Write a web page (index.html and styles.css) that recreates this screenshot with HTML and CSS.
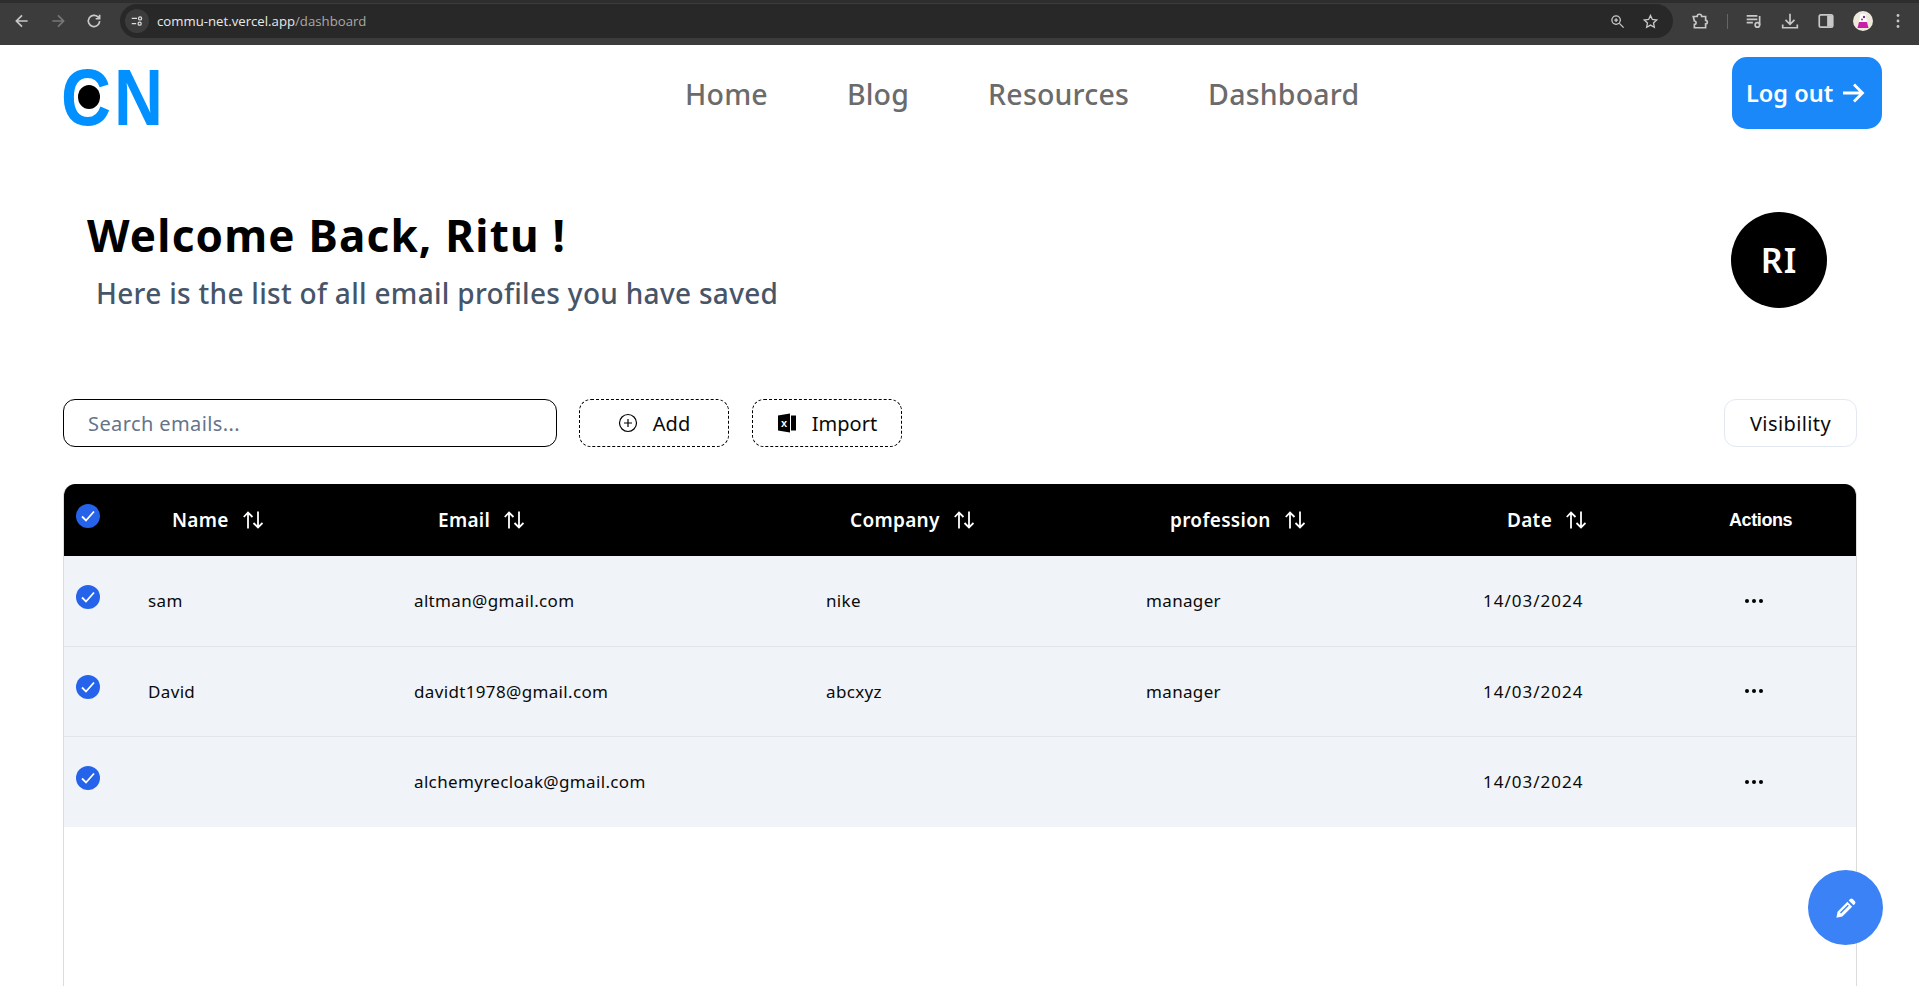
FILE: index.html
```html
<!DOCTYPE html>
<html lang="en">
<head>
  <meta charset="UTF-8" />
  <meta name="viewport" content="width=device-width, initial-scale=1.0"/>
  <title>Dashboard</title>
  <link rel="stylesheet" href="styles.css">
</head>
<body>

<div class="browser-bar">
  <svg class="bar-icon" viewBox="0 0 16 16"><path d="M13 8H3.500M8 3 3 8l5 5"/></svg>
  <svg class="bar-icon bar-icon-dim" viewBox="0 0 16 16"><path d="M3 8h9.500M8 3l5 5-5 5"/></svg>
  <svg class="bar-icon" viewBox="0 0 16 16"><path d="M13 8a5 5 0 1 1-1.500-3.600L13 6M13 2.500V6H9.500"/></svg>
  <div class="address">
    <span class="site-info">
      <svg viewBox="0 0 16 16"><path d="M2 5h6M2 11h5"/><circle cx="11.500" cy="5" r="1.800"/><circle cx="11" cy="11" r="1.800"/></svg>
    </span>
    <span class="url">commu-net.vercel.app<span class="url-path">/dashboard</span></span>
    <svg class="address-icon" viewBox="0 0 16 16"><circle cx="6.500" cy="6.500" r="4.500"/><path d="m10 10 4.500 4.500M4.500 6.500h4M6.500 4.500v4"/></svg>
    <svg class="address-icon" viewBox="0 0 16 16"><path d="m8 1.500 2 4.300 4.600.6-3.400 3.100.9 4.600L8 11.800l-4.100 2.300.9-4.600L1.400 6.400 6 5.800z"/></svg>
  </div>
  <div class="bar-right">
    <svg class="bar-icon" viewBox="0 0 16 16"><path d="M2 4h3.500a2 2 0 0 1 4 0H13v3.500a1.500 1.500 0 0 1 0 3V14H3v-3a1.500 1.500 0 0 0 0-3z"/></svg>
    <span class="bar-sep"></span>
    <svg class="bar-icon" viewBox="0 0 16 16"><path d="M1.500 3.500H11M1.500 6.500H11M1.500 9.500H7M13 3.500v8"/><circle cx="11" cy="11.500" r="2"/></svg>
    <svg class="bar-icon" viewBox="0 0 16 16"><path d="M8 1.500v9M4 7l4 4 4-4M1.500 11v3h13v-3"/></svg>
    <svg class="bar-icon" viewBox="0 0 16 16"><rect x="2" y="2.500" width="12" height="11" rx="1.500"/><rect class="bar-fill" x="9" y="3" width="4.500" height="10"/></svg>
    <svg class="profile" viewBox="0 0 20 20"><circle cx="10" cy="10" r="10" fill="#efe9dc"/><path d="M7.500 3h5l2.500 14H5z" fill="#fff"/><path d="M6 11h8l1.500 6h-11z" fill="#c81fa8"/><circle cx="11" cy="6" r="1.200" fill="#7a2a8c"/><circle cx="9" cy="8.500" r=".9" fill="#7a2a8c"/></svg>
    <svg class="bar-dots" viewBox="0 0 4 16"><circle cx="2" cy="2.500" r="1.400"/><circle cx="2" cy="8" r="1.400"/><circle cx="2" cy="13.500" r="1.400"/></svg>
  </div>
</div>

<nav class="nav">
  <svg class="logo" viewBox="-6 -20 124 96">
    <text class="logo-letter" x="-3" y="57" textLength="50" lengthAdjust="spacingAndGlyphs">C</text>
    <text class="logo-letter" x="50" y="57" textLength="49" lengthAdjust="spacingAndGlyphs">N</text>
    <ellipse cx="25" cy="29" rx="11" ry="12" fill="#000"/>
  </svg>
  <div class="nav-links">
    <a href="#">Home</a>
    <a href="#">Blog</a>
    <a href="#">Resources</a>
    <a href="#">Dashboard</a>
  </div>
  <button class="logout">Log out
    <svg viewBox="0 0 24 24"><path d="M2 12h19M13 3.500l8.500 8.500-8.500 8.500"/></svg>
  </button>
</nav>

<main class="content">
  <section class="hero">
    <div>
      <h1>Welcome Back, Ritu !</h1>
      <p>Here is the list of all email profiles you have saved</p>
    </div>
    <div class="avatar">RI</div>
  </section>

  <section class="toolbar">
    <input class="search" type="text" placeholder="Search emails...">
    <button class="dashed-btn">
      <svg viewBox="0 0 20 20"><circle cx="10" cy="10" r="8.500"/><path d="M10 6v8M6 10h8"/></svg>
      Add
    </button>
    <button class="dashed-btn">
      <svg class="excel" viewBox="0 0 20 20"><path d="M1 2.500 13 .5v19L1 17.500z"/><rect x="14" y="2.500" width="5" height="15"/><text x="4" y="13.500" class="excel-x">x</text></svg>
      Import
    </button>
    <button class="visibility">Visibility</button>
  </section>

  <div class="table-wrap">
    <table class="emails">
      <colgroup>
        <col class="col-check"><col class="col-name"><col class="col-email"><col class="col-company"><col class="col-profession"><col class="col-date"><col class="col-actions">
      </colgroup>
      <thead>
        <tr>
          <th class="check-cell"><svg class="check" viewBox="0 0 24 24"><circle cx="12" cy="12" r="12"/><path d="m6 12.500 4 4 8-9"/></svg></th>
          <th><span class="sort">Name <svg viewBox="0 0 20 18"><path d="M5 17.500V1.500M.8 6 5 1.500 9.500 6M15 .5v16M10.500 12l4.500 4.500 4.500-4.500"/></svg></span></th>
          <th><span class="sort">Email <svg viewBox="0 0 20 18"><path d="M5 17.500V1.500M.8 6 5 1.500 9.500 6M15 .5v16M10.500 12l4.500 4.500 4.500-4.500"/></svg></span></th>
          <th><span class="sort">Company <svg viewBox="0 0 20 18"><path d="M5 17.500V1.500M.8 6 5 1.500 9.500 6M15 .5v16M10.500 12l4.500 4.500 4.500-4.500"/></svg></span></th>
          <th><span class="sort">profession <svg viewBox="0 0 20 18"><path d="M5 17.500V1.500M.8 6 5 1.500 9.500 6M15 .5v16M10.500 12l4.500 4.500 4.500-4.500"/></svg></span></th>
          <th class="date-head"><span class="sort">Date <svg viewBox="0 0 20 18"><path d="M5 17.500V1.500M.8 6 5 1.500 9.500 6M15 .5v16M10.500 12l4.500 4.500 4.500-4.500"/></svg></span></th>
          <th class="actions-head">Actions</th>
        </tr>
      </thead>
      <tbody>
        <tr>
          <td class="check-cell"><svg class="check" viewBox="0 0 24 24"><circle cx="12" cy="12" r="12"/><path d="m6 12.500 4 4 8-9"/></svg></td>
          <td>sam</td>
          <td>altman@gmail.com</td>
          <td>nike</td>
          <td>manager</td>
          <td class="date">14/03/2024</td>
          <td><svg class="dots" viewBox="0 0 20 4"><circle cx="3" cy="2" r="2"/><circle cx="10" cy="2" r="2"/><circle cx="17" cy="2" r="2"/></svg></td>
        </tr>
        <tr>
          <td class="check-cell"><svg class="check" viewBox="0 0 24 24"><circle cx="12" cy="12" r="12"/><path d="m6 12.500 4 4 8-9"/></svg></td>
          <td>David</td>
          <td>davidt1978@gmail.com</td>
          <td>abcxyz</td>
          <td>manager</td>
          <td class="date">14/03/2024</td>
          <td><svg class="dots" viewBox="0 0 20 4"><circle cx="3" cy="2" r="2"/><circle cx="10" cy="2" r="2"/><circle cx="17" cy="2" r="2"/></svg></td>
        </tr>
        <tr>
          <td class="check-cell"><svg class="check" viewBox="0 0 24 24"><circle cx="12" cy="12" r="12"/><path d="m6 12.500 4 4 8-9"/></svg></td>
          <td></td>
          <td>alchemyrecloak@gmail.com</td>
          <td></td>
          <td></td>
          <td class="date">14/03/2024</td>
          <td><svg class="dots" viewBox="0 0 20 4"><circle cx="3" cy="2" r="2"/><circle cx="10" cy="2" r="2"/><circle cx="17" cy="2" r="2"/></svg></td>
        </tr>
      </tbody>
    </table>
  </div>
</main>

<button class="fab">
  <svg viewBox="0 0 24 24"><path d="M16.500 2.300a2 2 0 0 1 2.800 0l2.400 2.400a2 2 0 0 1 0 2.800l-1.500 1.500-5.200-5.200zM13.500 5.300l5.200 5.200L8 21.200 1.500 22.500 2.800 16z"/><path class="fab-cut" d="m6 17.500 8.500-8.500"/></svg>
</button>

</body>
</html>
```

FILE: styles.css
```css
* { box-sizing: border-box; }
html, body { height: 100%; }
body { margin: 0; overflow: hidden; background: #fff; color: #0a0a0a; font-family: "Noto Sans", sans-serif; }
button { font-family: inherit; cursor: pointer; }

/* browser chrome */
.browser-bar {
  height: 45px;
  display: flex;
  align-items: center;
  padding: 0 0 6px 13px;
  background: #3c3c3c;
  border-top: 3px solid #2e2e2e;
}

.bar-icon {
  width: 18px;
  height: 18px;
  margin-right: 18px;
  fill: none;
  stroke: #c8c8c8;
  stroke-width: 1.500;
  flex: none;
}

.bar-icon-dim { stroke: #777; }
.bar-fill { fill: #c8c8c8; stroke: none; }

.address {
  display: flex;
  align-items: center;
  flex: none;
  width: 1553px;
  height: 34px;
  margin-left: -1px;
  padding: 0 15px 0 5px;
  background: #282828;
  border-radius: 17px;
}

.site-info {
  display: flex;
  align-items: center;
  justify-content: center;
  width: 24px;
  height: 24px;
  border-radius: 50%;
  background: #3c3c3c;
}

.site-info svg { width: 14px; height: 14px; fill: none; stroke: #ddd; stroke-width: 1.400; }

.url { margin-left: 8px; flex-grow: 1; font-family: "Open Sans", sans-serif; font-size: 13.200px; color: #e8e8e8; }
.url-path { color: #a9a9a9; }

.address-icon { width: 15px; height: 15px; margin-left: 18px; fill: none; stroke: #c8c8c8; stroke-width: 1.400; }

.bar-right { display: flex; align-items: center; margin-left: 18px; }
.bar-sep { width: 1px; height: 15px; margin-right: 17px; background: #666; }
.profile { width: 20px; height: 20px; margin-right: 23px; }
.bar-dots { width: 4px; height: 16px; fill: #c8c8c8; }

/* top nav */
.nav {
  display: flex;
  align-items: flex-start;
  height: 84px;
  padding: 12px 37px 0 58px;
}

.logo { width: 124px; height: 96px; margin-top: -9px; flex: none; }
.logo-letter { font-family: "Liberation Sans", sans-serif; font-weight: 700; font-size: 79px; fill: #0090ff; }

.nav-links { display: flex; gap: 79px; margin-left: 503px; margin-top: 19px; }
.nav-links a { font-size: 28.500px; font-weight: 500; line-height: 36px; letter-spacing: 0.200px; color: #6b6b6b; text-decoration: none; }

.logout {
  display: flex;
  align-items: center;
  gap: 8px;
  width: 150px;
  height: 72px;
  margin-left: auto;
  padding: 0 14px;
  border: none;
  border-radius: 15px;
  background: #1a88f8;
  color: #fff;
  font-size: 23.500px;
  font-weight: 600;
}

.logout svg { width: 24px; height: 24px; flex: none; fill: none; stroke: #fff; stroke-width: 2.800; }

/* page */
.content { padding: 0 62px 0 63px; }

.hero { display: flex; justify-content: space-between; align-items: flex-start; margin-top: 78px; padding: 0 30px 0 24px; }
.hero h1 { margin: 0; font-size: 44px; line-height: 56px; font-weight: 700; letter-spacing: 1.200px; color: #000; }
.hero p { margin: 12px 0 0 9px; font-size: 28px; line-height: 36px; font-weight: 500; letter-spacing: 0.300px; color: #475569; }

.avatar {
  display: flex;
  align-items: center;
  justify-content: center;
  width: 96px;
  height: 96px;
  margin-top: 5px;
  border-radius: 50%;
  background: #000;
  color: #fff;
  font-size: 34px;
  font-weight: 600;
  letter-spacing: 1px;
}

.toolbar { display: flex; align-items: center; height: 48px; margin-top: 88px; }

.search {
  width: 494px;
  height: 48px;
  padding: 0 24px;
  border: 1.500px solid #000;
  border-radius: 12px;
  outline: none;
  font-family: inherit;
  font-size: 20px;
  letter-spacing: 0.400px;
}

.search::placeholder { color: #64748b; }

.dashed-btn {
  display: flex;
  align-items: center;
  justify-content: center;
  gap: 15px;
  width: 150px;
  height: 48px;
  margin-left: 22px;
  background: #fff;
  border: 1px dashed #000;
  border-radius: 12px;
  color: #0a0a0a;
  font-size: 20px;
}

.dashed-btn + .dashed-btn { margin-left: 23px; }

.dashed-btn svg { width: 20px; height: 20px; fill: none; stroke: #000; stroke-width: 1.200; }
.dashed-btn svg.excel { fill: #000; stroke: none; }
.excel-x { fill: #fff; font-family: "Liberation Sans", sans-serif; font-size: 11px; font-weight: 700; }

.visibility {
  width: 133px;
  height: 48px;
  margin-left: auto;
  background: #fff;
  border: 1px solid #e2e8f0;
  border-radius: 12px;
  color: #0a0a0a;
  font-size: 20px;
  letter-spacing: 0.400px;
}

/* table */
.table-wrap {
  min-height: 560px;
  margin-top: 37px;
  border-left: 1px solid #dcdcdc;
  border-right: 1px solid #dcdcdc;
  border-radius: 12px 12px 0 0;
  overflow: hidden;
}

.emails { width: 100%; table-layout: fixed; border-collapse: collapse; }

.col-check { width: 68px; }
.col-name { width: 266px; }
.col-email { width: 412px; }
.col-company { width: 320px; }
.col-profession { width: 338px; }
.col-date { width: 245px; }

.emails thead tr { height: 72px; background: #000; color: #fff; }
.emails th { padding: 0 0 0 40px; text-align: left; font-size: 19px; font-weight: 600; letter-spacing: 0.300px; }
.emails th.check-cell, .emails td.check-cell { padding: 0 0 8px 12px; }
.emails th.date-head { padding-left: 39px; }
.emails th.actions-head { padding-left: 16px; font-family: "Liberation Sans", sans-serif; font-size: 18px; font-weight: 700; letter-spacing: -0.400px; }

.sort { display: inline-flex; align-items: center; gap: 14px; }
.sort svg { width: 20px; height: 18px; fill: none; stroke: #fff; stroke-width: 1.800; }

.emails tbody tr { height: 90px; background: #f0f3f8; border-bottom: 1px solid #e1e6ec; }
.emails tbody tr:last-child { height: 91px; border-bottom: none; }
.emails td { padding: 0 0 0 16px; font-size: 17px; letter-spacing: 0.350px; color: #0a0a0a; }
.emails td.date { padding-left: 15px; letter-spacing: 1px; }

.check { display: block; width: 24px; height: 24px; fill: #2563eb; }
.check path { fill: none; stroke: #fff; stroke-width: 1.800; }

.dots { display: block; width: 20px; height: 4px; margin-left: 15px; fill: #000; }

/* floating edit button */
.fab {
  position: fixed;
  left: 1808px;
  top: 870px;
  display: flex;
  align-items: center;
  justify-content: center;
  width: 75px;
  height: 75px;
  border: none;
  border-radius: 50%;
  background: #3b82f6;
}

.fab svg { width: 22px; height: 22px; fill: #fff; }
.fab-cut { fill: none; stroke: #3b82f6; stroke-width: 1.500; }
```
